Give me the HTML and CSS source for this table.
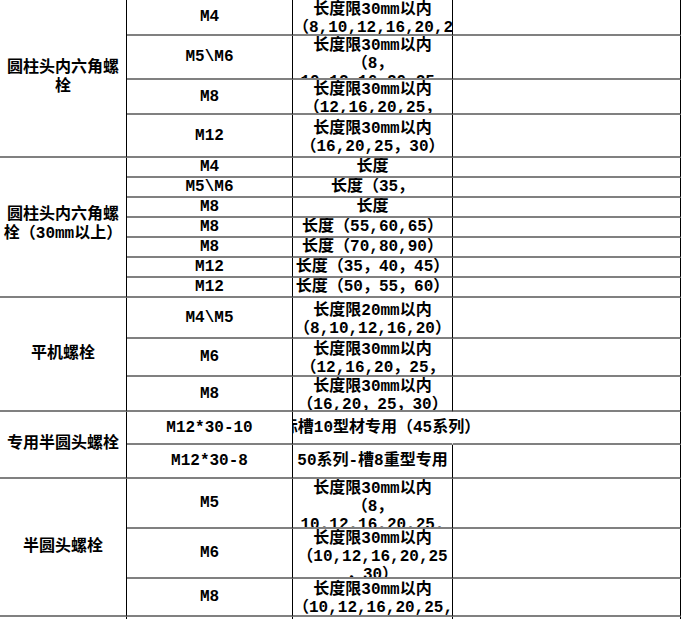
FILE: index.html
```html
<!DOCTYPE html>
<html lang="zh-CN">
<head>
<meta charset="utf-8">
<title>螺栓规格表</title>
<link rel="stylesheet" href="styles.css">
</head>
<body>
<div class="sheet">
  <div class="cell name span4">圆柱头内六角螺<br>栓</div>
  <div class="cell size">M4</div>
  <div class="cell spec two"><div class="ln">长度限30mm以内</div><div class="ln">（8,10,12,16,20,25,30）</div></div>
  <div class="cell pad"></div>
  <div class="cell size">M5\M6</div>
  <div class="cell spec top"><div class="ln">长度限30mm以内</div><div class="ln">（8，</div><div class="ln">10,12,16,20,25,</div></div>
  <div class="cell pad"></div>
  <div class="cell size">M8</div>
  <div class="cell spec two"><div class="ln">长度限30mm以内</div><div class="ln">（12,16,20,25，</div></div>
  <div class="cell pad"></div>
  <div class="cell size">M12</div>
  <div class="cell spec two"><div class="ln">长度限30mm以内</div><div class="ln">（16,20,25，30）</div></div>
  <div class="cell pad"></div>

  <div class="cell name span7">圆柱头内六角螺<br>栓（30mm以上）</div>
  <div class="cell size">M4</div>
  <div class="cell spec"><div class="ln">长度</div></div>
  <div class="cell pad"></div>
  <div class="cell size">M5\M6</div>
  <div class="cell spec"><div class="ln">长度（35，</div></div>
  <div class="cell pad"></div>
  <div class="cell size">M8</div>
  <div class="cell spec"><div class="ln">长度</div></div>
  <div class="cell pad"></div>
  <div class="cell size">M8</div>
  <div class="cell spec"><div class="ln">长度（55,60,65）</div></div>
  <div class="cell pad"></div>
  <div class="cell size">M8</div>
  <div class="cell spec"><div class="ln">长度（70,80,90）</div></div>
  <div class="cell pad"></div>
  <div class="cell size">M12</div>
  <div class="cell spec"><div class="ln">长度（35，40，45）</div></div>
  <div class="cell pad"></div>
  <div class="cell size">M12</div>
  <div class="cell spec"><div class="ln">长度（50，55，60）</div></div>
  <div class="cell pad"></div>

  <div class="cell name span3">平机螺栓</div>
  <div class="cell size">M4\M5</div>
  <div class="cell spec two"><div class="ln">长度限20mm以内</div><div class="ln">（8,10,12,16,20）</div></div>
  <div class="cell pad"></div>
  <div class="cell size">M6</div>
  <div class="cell spec two"><div class="ln">长度限30mm以内</div><div class="ln">（12,16,20，25，</div></div>
  <div class="cell pad"></div>
  <div class="cell size">M8</div>
  <div class="cell spec two"><div class="ln">长度限30mm以内</div><div class="ln">（16,20，25，30）</div></div>
  <div class="cell pad"></div>

  <div class="cell name span2">专用半圆头螺栓</div>
  <div class="cell size">M12*30-10</div>
  <div class="cell spec spill"><span class="ln">标槽10型材专用（45系列）</span></div>
  <div class="cell pad"></div>
  <div class="cell size">M12*30-8</div>
  <div class="cell spec"><div class="ln">50系列-槽8重型专用</div></div>
  <div class="cell pad"></div>

  <div class="cell name span3">半圆头螺栓</div>
  <div class="cell size">M5</div>
  <div class="cell spec top"><div class="ln">长度限30mm以内</div><div class="ln">（8，</div><div class="ln">10,12,16,20,25,</div></div>
  <div class="cell pad"></div>
  <div class="cell size">M6</div>
  <div class="cell spec top"><div class="ln">长度限30mm以内</div><div class="ln">（10,12,16,20,25</div><div class="ln">，30）</div></div>
  <div class="cell pad"></div>
  <div class="cell size">M8</div>
  <div class="cell spec two"><div class="ln">长度限30mm以内</div><div class="ln">（10,12,16,20,25,</div></div>
  <div class="cell pad"></div>

  <div class="cell name span1"></div>
  <div class="cell size"></div>
  <div class="cell spec"></div>
  <div class="cell pad"></div>
</div>
</body>
</html>
```

FILE: styles.css
```css
html, body {
  margin: 0;
  padding: 0;
  background: #fff;
}

body {
  overflow: hidden;
}

.sheet {
  display: grid;
  grid-template-columns: 127px 166px 160px 228px;
  grid-template-rows: 36px 44px 35px 43px repeat(7, 20px) 41px 38px 35px 33px 34px 50px 50px 38px 40px;
  font-family: "Liberation Mono", "Noto Sans CJK SC", monospace;
  font-size: 16px;
  font-weight: 700;
  line-height: 18px;
  color: #000;
  text-spacing-trim: space-all;
}

.cell {
  box-sizing: border-box;
  min-width: 0;
  border-right: 1px solid #000;
  border-bottom: 2px solid #808080;
  overflow: hidden;
  display: flex;
  flex-direction: column;
  justify-content: center;
  text-align: center;
  white-space: nowrap;
}

.name {
  grid-column: 1;
  line-height: 19px;
}

.size { grid-column: 2; }
.spec { grid-column: 3; }
.pad { grid-column: 4; }

.span1 { grid-row: span 1; }
.span2 { grid-row: span 2; }
.span3 { grid-row: span 3; }
.span4 { grid-row: span 4; }
.span7 { grid-row: span 7; padding-bottom: 5px; }

.ln {
  display: block;
}

.two {
  padding-top: 4px;
}

.top {
  justify-content: flex-start;
  padding-top: 1px;
}

.spill {
  overflow: visible;
  align-items: center;
  padding-left: 17px;
  border-right-color: transparent;
  clip-path: inset(0 -120px 0 0);
}
```
